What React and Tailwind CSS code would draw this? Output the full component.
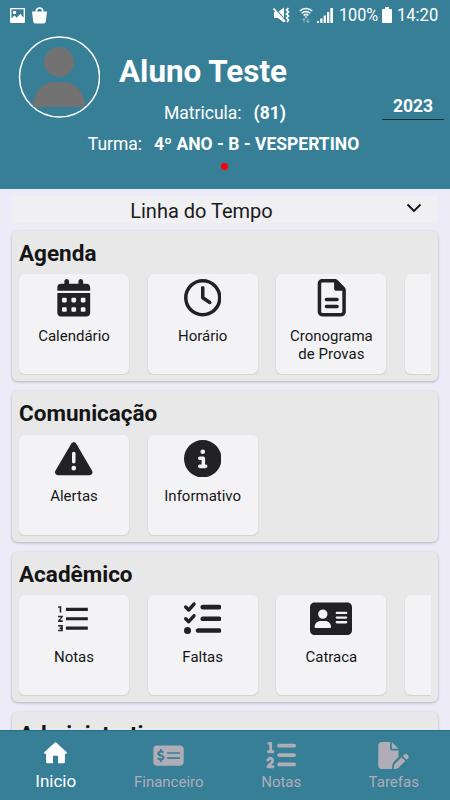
import React from 'react';
import {
    FaCalendarDays,
    FaRegClock,
    FaRegFileLines,
    FaTriangleExclamation,
    FaCircleInfo,
    FaListCheck,
    FaAddressCard,
    FaMoneyCheckDollar,
    FaListOl,
    FaFilePen
} from 'react-icons/fa6';
import {MdFormatListNumbered} from 'react-icons/md';

const SECTIONS = [
    {
        title: 'Agenda',
        items: [
            {label: 'Calendário', icon: <FaCalendarDays size={37.5}/>},
            {label: 'Horário', icon: <FaRegClock size={37.5}/>},
            {label: 'Cronograma de Provas', icon: <FaRegFileLines size={37.5}/>},
            {label: '', icon: null}
        ]
    },
    {
        title: 'Comunicação',
        items: [
            {label: 'Alertas', icon: <FaTriangleExclamation size={37.5}/>},
            {label: 'Informativo', icon: <FaCircleInfo size={37.5}/>}
        ]
    },
    {
        title: 'Acadêmico',
        items: [
            {label: 'Notas', icon: <MdFormatListNumbered size={37.5}/>},
            {label: 'Faltas', icon: <FaListCheck size={37.5}/>},
            {label: 'Catraca', icon: <FaAddressCard className="h-[37.500px] w-[42px]"/>},
            {label: '', icon: null}
        ]
    },
    {
        title: 'Administrativo',
        items: []
    }
];

function HomeIcon() {
    return (
        <svg className="-mt-[5px]" width="23" height="22" viewBox="0 0 23 22" fill="#fff">
            <path d="M10.600.700a1.400 1.400 0 0 1 1.800 0L22.500 10c.800.800.400 1.700-.500 1.700h-1.100v8.300a1.300 1.300 0 0 1-1.300 1.300h-5.500v-7.500H9v7.500H3.400A1.300 1.300 0 0 1 2.100 20v-8.300H1c-.900 0-1.300-.900-.500-1.700Z"/>
        </svg>
    );
}

const TABS = [
    {label: 'Inicio', icon: <HomeIcon/>, active: true},
    {label: 'Financeiro', icon: <FaMoneyCheckDollar className="h-[27px] w-[31px]"/>},
    {label: 'Notas', icon: <FaListOl size={30}/>},
    {label: 'Tarefas', icon: <FaFilePen className="h-[27px] w-[31px]"/>}
];

function StatusBar() {
    return (
        <div className="flex h-[30px] items-center justify-between pl-[10px] pr-[11px]">
            <div className="flex items-center gap-[7px]">
                <svg width="15" height="15" viewBox="0 0 15 15" fill="#fff">
                    <path fillRule="evenodd" d="M1 0h13a1 1 0 0 1 1 1v13a1 1 0 0 1-1 1H1a1 1 0 0 1-1-1V1a1 1 0 0 1 1-1Zm.4 1.3v9.3l3.1-3 2.3 2.1 3.5-4 3.3 4V1.3Z"/>
                    <circle cx="4.5" cy="4.5" r="1.7"/>
                </svg>
                <svg width="15" height="17" viewBox="0 0 15 17" fill="#fff">
                    <path d="M4.300 5.500V4a3.200 3 0 0 1 6.400 0v1.500" fill="none" stroke="#fff" strokeWidth="1.700"/>
                    <path d="M0 4.500h15l-1.200 10a2.200 2.200 0 0 1-2.200 2H3.400a2.200 2.200 0 0 1-2.200-2Z"/>
                </svg>
            </div>
            <div className="flex items-center text-white">
                <svg width="17" height="16" viewBox="0 0 17 16" fill="#fff">
                    <path d="M1 5h4l6-4.5v15L5 11H1Z"/>
                    <path d="m1.800 1 11 13" stroke="#377f97" strokeWidth="1.200"/>
                    <path d="m.5 1.500 11.500 13" stroke="#fff" strokeWidth="1.700"/>
                    <path d="m15.500 1-2 2 2 2-2 2 2 2-2 2 2 2-1.500 2" fill="none" stroke="#fff" strokeWidth="1.700"/>
                </svg>
                <svg className="ml-[9px]" width="14" height="16" viewBox="0 0 14 16" fill="none" stroke="#fff" strokeWidth="1.500">
                    <path d="M.8 4a8.700 8.700 0 0 1 12.400 0M2.700 6.300a6 6 0 0 1 8.600 0M4.600 8.500a3.500 3.500 0 0 1 4.800 0"/>
                    <path d="m5.500 9.500 1.500 1.700 1.500-1.700Z" fill="#fff" stroke="none"/>
                    <path d="M5 15.500v-4m-1.500 1.700L5 11.500l1.500 1.700M9 11.500v4m-1.500-1.700L9 15.500l1.500-1.700" stroke="#9bbfcb" strokeWidth="1"/>
                </svg>
                <svg className="ml-[4px]" width="16" height="16" viewBox="0 0 16 16" fill="#fff">
                    <path d="M0 14h2v2H0zM3.200 11.500h2.300V16H3.200zM6.600 8.500h2.300V16H6.600zM10 5h2.300v11H10zM13.300 1H16v15h-2.700z"/>
                </svg>
                <span className="ml-[6px] inline-block w-[39px] origin-left scale-x-[.9] whitespace-nowrap text-[18px] leading-5">100%</span>
                <svg className="ml-[4px]" width="10" height="16" viewBox="0 0 10 16" fill="#fff">
                    <path d="M3 0h4v2h2a1 1 0 0 1 1 1v12a1 1 0 0 1-1 1H1a1 1 0 0 1-1-1V3a1 1 0 0 1 1-1h2Z"/>
                </svg>
                <span className="ml-[5px] inline-block w-[42px] origin-left scale-x-[.92] whitespace-nowrap text-[18px] leading-5">14:20</span>
            </div>
        </div>
    );
}

function Header() {
    return (
        <header className="h-[188.500px] shrink-0 bg-[#377f97] text-white">
            <StatusBar/>
            <div className="flex pl-[18px] pt-[6px]">
                <svg width="82" height="82" viewBox="0 0 82 82">
                    <circle cx="41.500" cy="41" r="40" fill="none" stroke="#fff" strokeWidth="1.500"/>
                    <circle cx="41" cy="26" r="15" fill="#727272"/>
                    <path d="M15 71c0-14 9-25 22-25h8c13 0 22 11 22 25Z" fill="#727272"/>
                </svg>
                <h1 className="ml-[19px] mt-[18px] text-[31.400px] font-bold leading-9">Aluno Teste</h1>
            </div>
            <div className="-mt-[23px] grid grid-cols-[1fr_auto_1fr] items-start">
                <div className="col-start-2 mt-[6px] flex gap-3 text-[17.500px] leading-6">
                    <span>Matricula:</span>
                    <span className="font-bold">(81)</span>
                </div>
                <div className="mr-[6px] h-[25px] w-[62px] justify-self-end border-b border-[#172d35] text-center text-[17.500px] font-bold leading-[22px]">2023</div>
            </div>
            <div className="mt-[7px] flex justify-center gap-3 pr-[3px] text-[17.500px] leading-6">
                <span>Turma:</span>
                <span className="font-bold">4º ANO - B - VESPERTINO</span>
            </div>
            <div className="ml-[221px] mt-[7px] h-[7px] w-[7px] rounded-full bg-[#ff0000]"/>
        </header>
    );
}

function Tile({label, icon}) {
    return (
        <div className="flex h-[100px] w-[110px] shrink-0 flex-col items-center rounded-[6px] bg-[#f3f3f5] pt-[5px] text-[#222224] shadow-[0_1px_2px_rgba(0,0,0,0.12)]">
            <div className="flex h-[38px] items-center">{icon}</div>
            <div className="mt-[9.500px] w-[90px] text-center text-[15px] leading-[18px] text-[#161616]">{label}</div>
        </div>
    );
}

function Section({title, items}) {
    return (
        <section className="h-[150.600px] shrink-0 rounded-[6px] bg-[#e8e8e8] px-[7px] pt-[7px] shadow-[0_1px_3px_rgba(0,0,0,0.25)]">
            <h2 className="text-[22.500px] font-bold leading-[30px] text-[#141414]">{title}</h2>
            <div className="mt-[6.500px] flex h-[101px] gap-[18.700px] overflow-hidden">
                {items.map((item, i) => (<Tile key={i} label={item.label} icon={item.icon}/>))}
            </div>
        </section>
    );
}

export default function App() {
    return (
        <div className="flex h-[800px] w-[450px] flex-col overflow-hidden bg-[#edebf7] font-[Roboto,sans-serif]">
            <Header/>
            <main className="flex min-h-0 flex-1 flex-col overflow-hidden px-[12px] pt-[7.500px]">
                <div className="flex h-[27px] shrink-0 items-center bg-[#f0f0f2] pr-[16px]">
                    <span className="flex-1 pr-[15px] pt-[3px] text-center text-[20px] text-[#1a1a1a]">Linha do Tempo</span>
                    <svg className="-mt-[3px]" width="16" height="10" viewBox="0 0 16 10" fill="none" stroke="#111" strokeWidth="1.800">
                        <path d="m1.500 1.500 6.500 6.500 6.500-6.500"/>
                    </svg>
                </div>
                <div className="mt-[7.500px] flex flex-col gap-[10px]">
                    {SECTIONS.map((s) => (<Section key={s.title} title={s.title} items={s.items}/>))}
                </div>
            </main>
            {/* Bottom tabs */}
            <nav className="grid h-[70px] shrink-0 grid-cols-4 border-t border-[#1f6f87] bg-[#377f97]">
                {TABS.map((tab, i) => (
                    <div key={i} className={tab.active ? 'flex flex-col items-center pt-[9px] pr-[1px] text-white' : 'flex flex-col items-center pt-[9px] text-[#b0adb6]'}>
                        <div className="flex h-[30px] items-center">{tab.icon}</div>
                        <span className={tab.active ? 'text-[17px] leading-[23px]' : 'text-[15px] leading-[25px]'}>{tab.label}</span>
                    </div>
                ))}
            </nav>
        </div>
    );
}
